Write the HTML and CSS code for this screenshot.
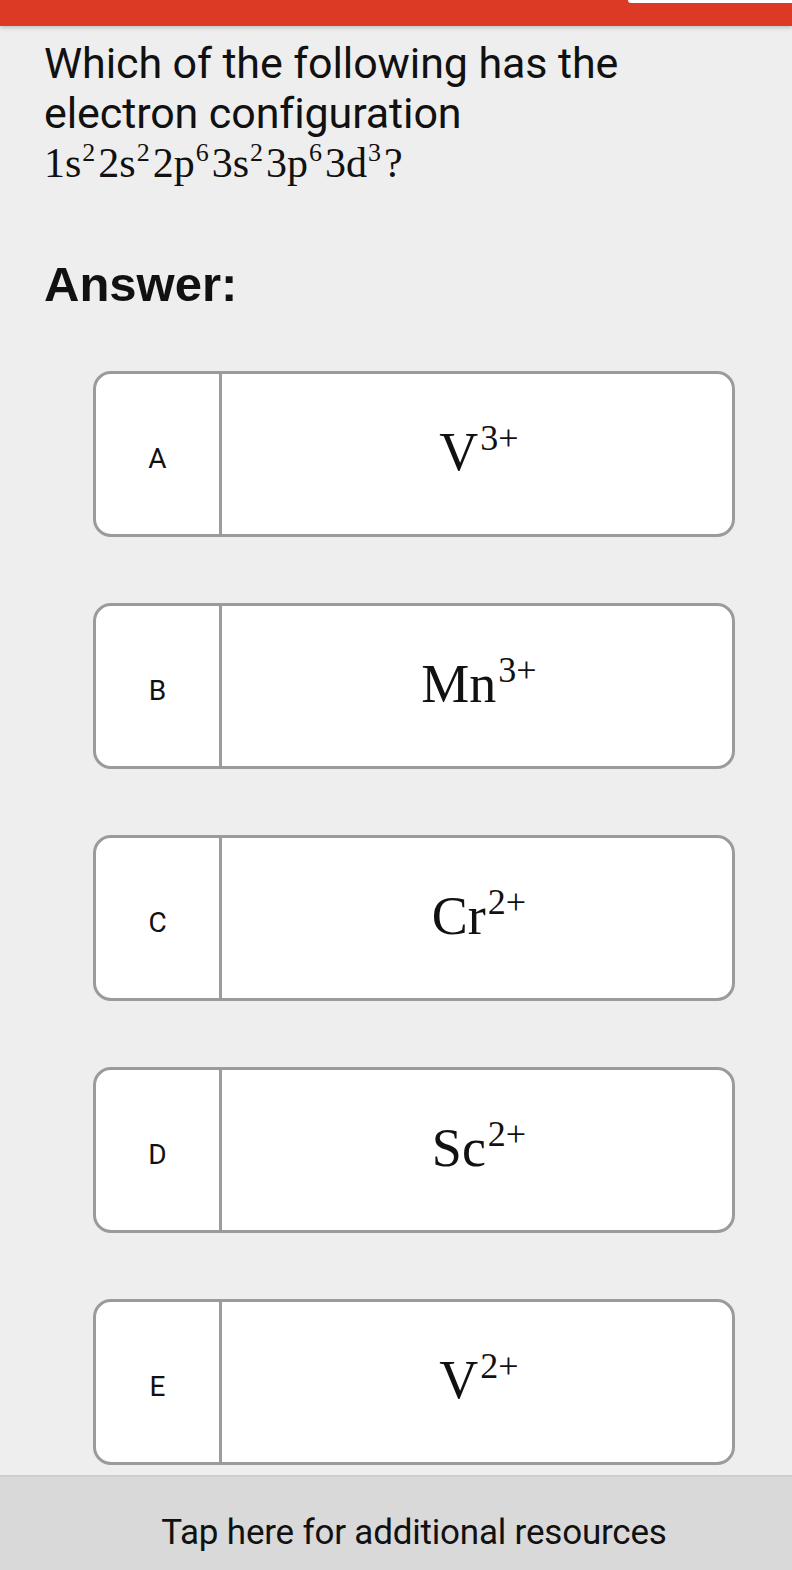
FILE: index.html
```html
<!DOCTYPE html>
<html lang="en">
<head>
<meta charset="utf-8">
<title>Question</title>
<link rel="stylesheet" href="styles.css">
</head>
<body>
<header class="topbar"><div class="topbar-tab"></div></header>
<main class="content">
  <p class="question">Which of the following has the electron configuration
    <span class="formula">1s<sup>2</sup>2s<sup>2</sup>2p<sup>6</sup>3s<sup>2</sup>3p<sup>6</sup>3d<sup>3</sup>?</span></p>
  <h2 class="answer-title">Answer:</h2>
  <div class="options">
    <div class="option"><div class="opt-letter">A</div><div class="opt-body"><span class="ion">V<sup>3+</sup></span></div></div>
    <div class="option"><div class="opt-letter">B</div><div class="opt-body"><span class="ion">Mn<sup>3+</sup></span></div></div>
    <div class="option"><div class="opt-letter">C</div><div class="opt-body"><span class="ion">Cr<sup>2+</sup></span></div></div>
    <div class="option"><div class="opt-letter">D</div><div class="opt-body"><span class="ion">Sc<sup>2+</sup></span></div></div>
    <div class="option"><div class="opt-letter">E</div><div class="opt-body"><span class="ion">V<sup>2+</sup></span></div></div>
  </div>
</main>
<footer class="resources">Tap here for additional resources</footer>
</body>
</html>
```
FILE: styles.css
```css
html, body {
  margin: 0;
  padding: 0;
  background: #eeeeee;
}
body {
  width: 792px;
  min-height: 1570px;
  display: flex;
  flex-direction: column;
  color: #111;
}
.topbar {
  position: relative;
  height: 26px;
  background: #dc3a24;
  box-shadow: 0 2px 4px rgba(0,0,0,0.18);
}
.topbar-tab {
  position: absolute;
  right: 0;
  top: 0;
  width: 164px;
  height: 3px;
  background: #fff;
  border-bottom-left-radius: 6px;
}
.content {
  flex: 1;
  padding: 0 0 0 44px;
}
.question {
  margin: 12px 0 0 0;
  width: 660px;
  font-family: Roboto, "Liberation Sans", sans-serif;
  font-size: 43px;
  line-height: 50px;
  letter-spacing: -0.1px;
}
.formula {
  display: block;
  font-family: "Liberation Serif", serif;
  font-size: 42px;
  letter-spacing: 0;
}
.formula sup {
  font-size: 26px;
  vertical-align: 0;
  position: relative;
  top: -16px;
  margin: 0 3px 0 1px;
  line-height: 0;
}
.answer-title {
  margin: 68px 0 0 0;
  font-family: "Liberation Sans", Arial, sans-serif;
  font-weight: bold;
  font-size: 49px;
  line-height: 56px;
}
.options {
  margin: 59px 0 0 49px;
  display: flex;
  flex-direction: column;
  gap: 66px;
}
.option {
  box-sizing: border-box;
  width: 642px;
  height: 166px;
  border: 3px solid #9b9b9b;
  border-radius: 18px;
  background: #fff;
  display: flex;
  overflow: hidden;
}
.opt-letter {
  width: 126px;
  border-right: 3px solid #9b9b9b;
  display: flex;
  align-items: center;
  justify-content: center;
  font-family: Roboto, "Liberation Sans", sans-serif;
  font-size: 28px;
  padding-top: 8px;
  box-sizing: border-box;
}
.opt-body {
  flex: 1;
  display: flex;
  align-items: center;
  justify-content: center;
  padding-bottom: 4px;
}
.ion {
  font-family: "Liberation Serif", serif;
  font-size: 54px;
  line-height: 1;
  padding-left: 4px;
}
.ion sup {
  font-size: 36px;
  vertical-align: 0;
  position: relative;
  top: -20px;
  line-height: 0;
  margin-left: 2px;
}
.resources {
  margin-top: 10px;
  height: 99px;
  box-sizing: border-box;
  border-top: 2px solid #cfcfcf;
  background: #d9d9d9;
  display: flex;
  align-items: center;
  justify-content: center;
  padding-left: 36px;
  padding-top: 14px;
  font-family: Roboto, "Liberation Sans", sans-serif;
  font-size: 35px;
  letter-spacing: -0.2px;
  color: #111;
}
```
